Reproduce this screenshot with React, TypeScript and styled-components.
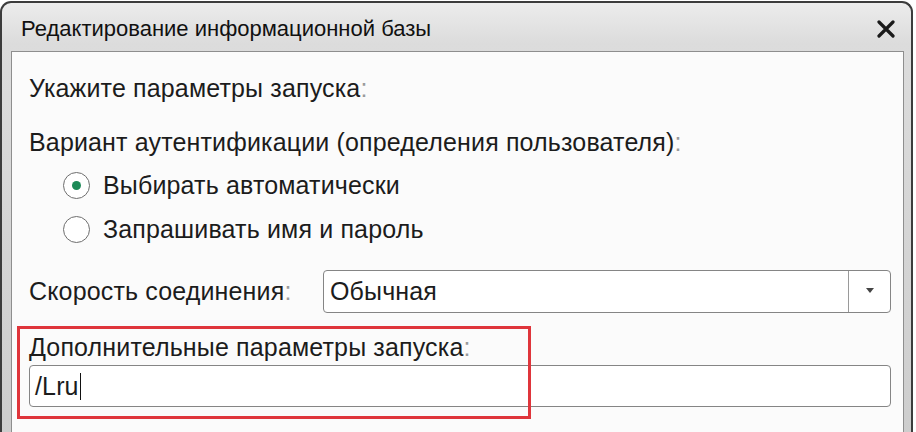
import styled, { createGlobalStyle } from 'styled-components';

const GlobalStyle = createGlobalStyle`
	html, body {
		margin: 0;
		background: #ffffff;
		overflow: hidden;
	}
	body {
		font-family: 'Liberation Sans', Arial, sans-serif;
	}
`;

const Window = styled.div`
	width: 913px;
	height: 440px;
	margin-top: 1px;
	box-sizing: border-box;
	border: 2px solid #3c3c3c;
	border-bottom: none;
	border-radius: 11px 11px 0 0;
	background: linear-gradient(#ececec 0px, #dcdcdc 40px, #cdcdcd 100%);
	padding: 0 7px 0 9px;
	display: flex;
	flex-direction: column;
`;

const TitleBar = styled.div`
	height: 48px;
	display: flex;
	align-items: center;
	justify-content: space-between;
	padding: 3px 9px 0 10px;
	box-sizing: border-box;
`;

const Title = styled.div`
	font: 400 22px 'Liberation Sans', Arial, sans-serif;
	color: #111;
`;

const Close = styled.svg`
	width: 18px;
	height: 18px;
`;

const Content = styled.div`
	flex: 1;
	background: #fbfbfb;
	border: 1px solid #8e8e8e;
	border-bottom: none;
	padding: 22px 12px 0 17px;
	color: #1c1c1c;
	font: 400 25px 'Liberation Sans', Arial, sans-serif;
	letter-spacing: 0.15px;
`;

const Text = styled.div<{ $gap?: number }>`
	line-height: 28px;
	margin-bottom: ${(p) => p.$gap ?? 0}px;
`;

const Colon = styled.span`
	color: #9a9a9a;
`;

const RadioList = styled.div`
	display: flex;
	flex-direction: column;
	gap: 16px;
	padding-left: 34px;
	margin-top: 15px;
`;

const RadioRow = styled.div`
	display: flex;
	align-items: center;
	gap: 13px;
	height: 28px;
`;

const Circle = styled.span<{ $on?: boolean }>`
	width: 27px;
	height: 27px;
	box-sizing: border-box;
	border-radius: 50%;
	border: 1px solid #6e6e6e;
	background: #fff;
	display: flex;
	align-items: center;
	justify-content: center;

	&::after {
		content: '';
		width: 9px;
		height: 9px;
		border-radius: 50%;
		background: ${(p) => (p.$on ? '#1d8a57' : 'transparent')};
	}
`;

const SpeedRow = styled.div`
	display: flex;
	align-items: center;
	margin-top: 27px;
`;

const SpeedLabel = styled.div`
	width: 294px;
`;

const Select = styled.div`
	flex: 1;
	height: 43px;
	box-sizing: border-box;
	border: 1px solid #858585;
	border-radius: 4px;
	background: #fff;
	display: flex;
	align-items: stretch;
`;

const SelectValue = styled.div`
	flex: 1;
	display: flex;
	align-items: center;
	padding-left: 6px;
`;

const DropButton = styled.div`
	width: 41px;
	border-left: 1px solid #9a9a9a;
	display: flex;
	align-items: center;
	justify-content: center;

	&::after {
		content: '';
		border-left: 4px solid transparent;
		border-right: 4px solid transparent;
		border-top: 5px solid #444;
		margin-top: -3px;
	}
`;

const ExtraField = styled.div`
	position: relative;
	margin-top: 20px;
`;

const Highlight = styled.div`
	position: absolute;
	left: -12px;
	top: -7px;
	width: 514px;
	height: 93px;
	box-sizing: border-box;
	border: 3px solid #df353b;
	pointer-events: none;
`;

const Input = styled.div`
	margin-top: 4px;
	height: 42px;
	box-sizing: border-box;
	border: 1px solid #858585;
	border-radius: 4px;
	background: #fff;
	display: flex;
	align-items: center;
	padding-left: 5px;
`;

const Caret = styled.span`
	display: inline-block;
	width: 1.5px;
	height: 27px;
	background: #111;
	margin-left: 1px;
`;

export default function App() {
	return (
		<>
			<GlobalStyle />
			<Window>
				<TitleBar>
					<Title>Редактирование информационной базы</Title>
					<Close viewBox="0 0 18 18">
						<path d="M2 2 L16 16 M16 2 L2 16" stroke="#1a1a1a" strokeWidth="3.2" strokeLinecap="round" />
					</Close>
				</TitleBar>
				<Content>
					<Text $gap={26}>
						Укажите параметры запуска<Colon>:</Colon>
					</Text>
					<Text>
						Вариант аутентификации (определения пользователя)<Colon>:</Colon>
					</Text>
					<RadioList>
						<RadioRow>
							<Circle $on />
							Выбирать автоматически
						</RadioRow>
						<RadioRow>
							<Circle />
							Запрашивать имя и пароль
						</RadioRow>
					</RadioList>
					<SpeedRow>
						<SpeedLabel>
							Скорость соединения<Colon>:</Colon>
						</SpeedLabel>
						<Select>
							<SelectValue>Обычная</SelectValue>
							<DropButton />
						</Select>
					</SpeedRow>
					<ExtraField>
						<Highlight />
						<Text>
							Дополнительные параметры запуска<Colon>:</Colon>
						</Text>
						<Input>
							/Lru
							<Caret />
						</Input>
					</ExtraField>
				</Content>
			</Window>
		</>
	);
}
